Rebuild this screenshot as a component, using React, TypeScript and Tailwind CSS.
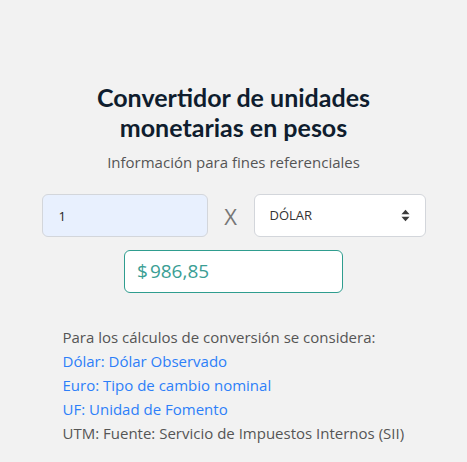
import { useState } from 'react';

const rates: Record<string, number> = {
    dolar: 986.85,
    euro: 1071.32,
    uf: 37571.86,
    utm: 65967,
};

export default function App() {
    const [amount, setAmount] = useState('1');
    const [unit, setUnit] = useState('dolar');

    const value = (Number(amount) || 0) * rates[unit];
    const formatted = value.toLocaleString('es-CL', {
        minimumFractionDigits: 2,
        maximumFractionDigits: 2,
    });

    return (
        <div className="min-h-[462px] bg-[#f2f2f2] pt-[82px] font-['Open_Sans',sans-serif]">
            <div className="mx-auto w-[384px]">
                <h1 className="text-center font-['Lato',sans-serif] text-[25px] font-bold leading-[30px] text-[#0f1d2e]">
                    Convertidor de unidades
                    <br />
                    monetarias en pesos
                </h1>
                <p className="mt-2 text-center text-[15px] leading-6 text-[#555]">
                    Información para fines referenciales
                </p>

                {/* Amount and unit */}
                <div className="mt-5 flex items-center">
                    <input
                        type="text"
                        value={amount}
                        onChange={(e) => setAmount(e.target.value)}
                        className="h-[43px] w-[166px] rounded-md border border-[#d3d6db] bg-[#e8f0fe] px-4 text-[13px] text-[#222] outline-none"
                    />
                    <span className="mx-auto text-[22px] leading-none text-[#777]">X</span>
                    <div className="relative w-[172px]">
                        <select
                            value={unit}
                            onChange={(e) => setUnit(e.target.value)}
                            className="h-[43px] w-full appearance-none rounded-md border border-[#d3d6db] bg-white px-[15px] text-[13px] text-[#333] outline-none"
                        >
                            <option value="dolar">DÓLAR</option>
                            <option value="euro">EURO</option>
                            <option value="uf">UF</option>
                            <option value="utm">UTM</option>
                        </select>
                        <svg
                            viewBox="0 0 12 16"
                            className="pointer-events-none absolute right-[15px] top-[15px] h-[13px] w-[11px]"
                        >
                            <path d="M6 1 L11 6.5 H1 Z" fill="#3a3a3a" />
                            <path d="M6 15 L11 9.5 H1 Z" fill="#3a3a3a" />
                        </svg>
                    </div>
                </div>

                {/* Result */}
                <div className="mx-auto mt-[13px] flex h-[43px] w-[219px] items-center rounded-md border border-[#2f9d8f] bg-white px-3 text-[19px] text-[#3a9e94]">
                    <span className="mr-[2px]">$</span>
                    {formatted}
                </div>

                {/* Notes */}
                <div className="mt-[32px] pl-[21px] text-[15px] leading-6">
                    <p className="text-[#555]">Para los cálculos de conversión se considera:</p>
                    <p className="text-[#2d7ff9]">Dólar: Dólar Observado</p>
                    <p className="text-[#2d7ff9]">Euro: Tipo de cambio nominal</p>
                    <p className="text-[#2d7ff9]">UF: Unidad de Fomento</p>
                    <p className="text-[#555]">UTM: Fuente: Servicio de Impuestos Internos (SII)</p>
                </div>
            </div>
        </div>
    );
}
